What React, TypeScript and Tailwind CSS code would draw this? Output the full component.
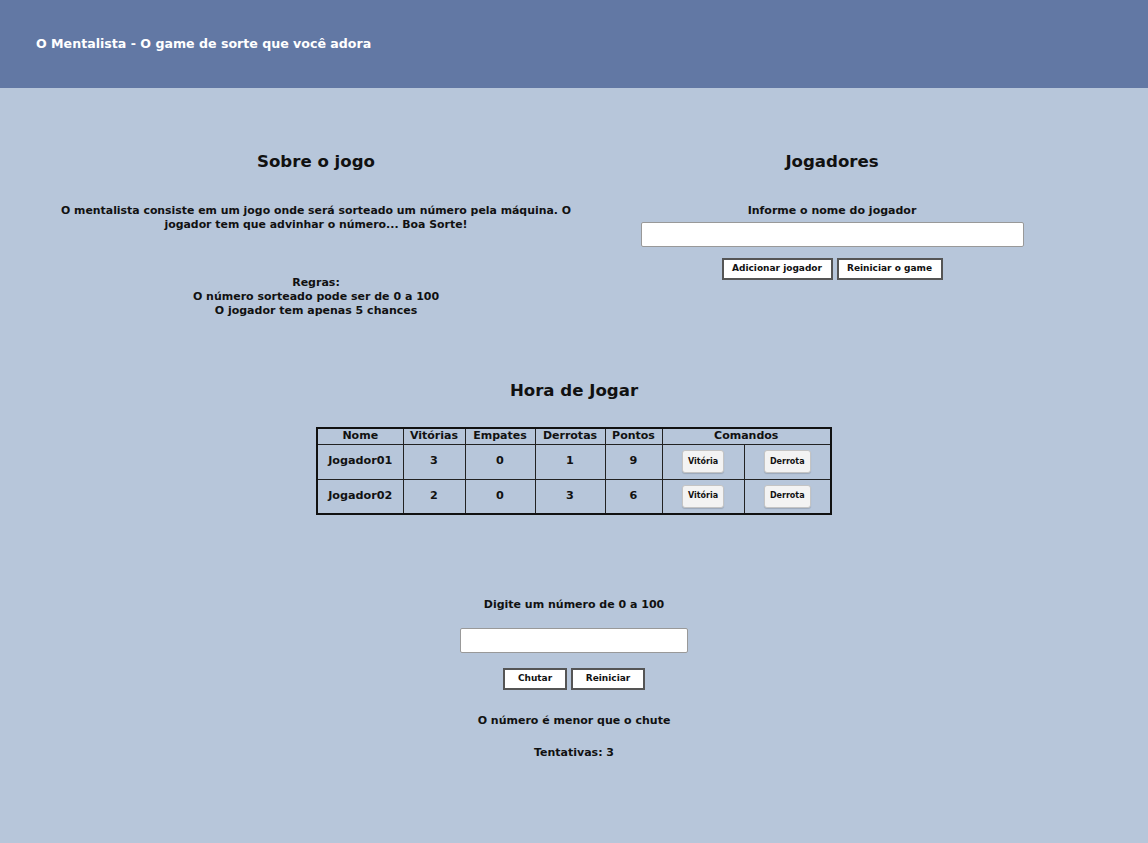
const font = "font-['DejaVu_Sans',Verdana,sans-serif]";

const players = [
  { nome: "Jogador01", vitorias: 3, empates: 0, derrotas: 1, pontos: 9 },
  { nome: "Jogador02", vitorias: 2, empates: 0, derrotas: 3, pontos: 6 },
];

function WhiteButton({ children, w }: { children: React.ReactNode; w: string }) {
  return (
    <button
      className={`h-[22px] ${w} whitespace-nowrap border-2 border-[#555] bg-white text-[9px] font-bold text-[#111]`}
    >
      {children}
    </button>
  );
}

function SmallButton({ children, w }: { children: React.ReactNode; w: string }) {
  return (
    <button
      className={`h-[23px] ${w} whitespace-nowrap rounded-[3px] border border-[#c4c4c4] bg-[#f3f3f3] text-[8px] font-bold text-[#111] shadow-[0_1px_1px_rgba(0,0,0,0.15)]`}
    >
      {children}
    </button>
  );
}

export default function App() {
  return (
    <div className={`min-h-[843px] bg-[#b7c6da] text-[#111] ${font}`}>
      <header className="flex h-[88px] items-center bg-[#6278a4] px-[36px]">
        <h1 className="text-[12.6px] font-bold text-white">O Mentalista - O game de sorte que você adora</h1>
      </header>

      <div className="flex pt-[62px]">
        <section className="flex w-[632px] flex-col items-center">
          <h2 className="text-[16.6px] font-bold leading-[24px]">Sobre o jogo</h2>
          <p className="mt-[30px] w-[530px] text-center text-[10.9px] font-bold leading-[14px]">
            O mentalista consiste em um jogo onde será sorteado um número pela máquina. O jogador tem que advinhar o número... Boa Sorte!
          </p>
          <p className="mt-[44px] text-center text-[11px] font-bold leading-[14px]">
            Regras:
            <br />O número sorteado pode ser de 0 a 100
            <br />O jogador tem apenas 5 chances
          </p>
        </section>

        <section className="flex w-[400px] flex-col items-center">
          <h2 className="text-[16.6px] font-bold leading-[24px]">Jogadores</h2>
          <label className="mt-[30px] text-[11px] font-bold leading-[14px]">Informe o nome do jogador</label>
          <input className="mt-[4px] h-[25px] w-[383px] rounded-[2px] border border-[#999] bg-white" />
          <div className="mt-[11px] flex gap-[4px]">
            <WhiteButton w="w-[111px]">Adicionar jogador</WhiteButton>
            <WhiteButton w="w-[106px]">Reiniciar o game</WhiteButton>
          </div>
        </section>
      </div>

      <section className="mt-[61px] flex flex-col items-center">
        <h2 className="text-[16.6px] font-bold leading-[24px]">Hora de Jogar</h2>
        <table className="mt-[24px] w-[516px] border-collapse border-2 border-[#111] text-center text-[11px] font-bold">
          <thead>
            <tr className="h-[16px] leading-[14px]">
              <th className="w-[86px] border border-[#222]">Nome</th>
              <th className="w-[62px] border border-[#222]">Vitórias</th>
              <th className="w-[70px] border border-[#222]">Empates</th>
              <th className="w-[70px] border border-[#222]">Derrotas</th>
              <th className="w-[57px] border border-[#222]">Pontos</th>
              <th colSpan={2} className="border border-[#222]">Comandos</th>
            </tr>
          </thead>
          <tbody>
            {players.map((p) => (
              <tr key={p.nome} className="h-[35px] text-[11.2px]">
                <td className="border border-[#222]">{p.nome}</td>
                <td className="border border-[#222]">{p.vitorias}</td>
                <td className="border border-[#222]">{p.empates}</td>
                <td className="border border-[#222]">{p.derrotas}</td>
                <td className="border border-[#222]">{p.pontos}</td>
                <td className="w-[82px] border border-[#222]">
                  <SmallButton w="w-[42px]">Vitória</SmallButton>
                </td>
                <td className="border border-[#222]">
                  <SmallButton w="w-[47px]">Derrota</SmallButton>
                </td>
              </tr>
            ))}
          </tbody>
        </table>
      </section>

      <section className="mt-[83px] flex flex-col items-center">
        <p className="text-[11px] font-bold leading-[14px]">Digite um número de 0 a 100</p>
        <input className="mt-[16px] h-[25px] w-[228px] rounded-[2px] border border-[#999] bg-white" />
        <div className="mt-[15px] flex gap-[4px]">
          <WhiteButton w="w-[64px]">Chutar</WhiteButton>
          <WhiteButton w="w-[74px]">Reiniciar</WhiteButton>
        </div>
        <p className="mt-[24px] text-[11px] font-bold leading-[14px]">O número é menor que o chute</p>
        <p className="mt-[18px] text-[11px] font-bold leading-[14px]">Tentativas: 3</p>
      </section>
    </div>
  );
}
